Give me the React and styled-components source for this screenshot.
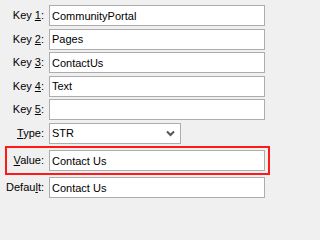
import React from 'react'
import styled, { createGlobalStyle } from 'styled-components'

const GlobalStyle = createGlobalStyle`
  html, body {
    margin: 0;
    padding: 0;
    background: #f0f0f0;
  }
  body {
    font-family: "Liberation Sans", Arial, sans-serif;
    font-size: 11px;
    color: #000;
  }
`

const Form = styled.div`
  display: flex;
  flex-direction: column;
  gap: 2.5px;
  padding: 5px 6px 0 0;
  width: 271px;
  height: 202px;
  box-sizing: border-box;
`

const Row = styled.div`
  position: relative;
  display: flex;
  align-items: center;
  gap: 5px;
  height: 21px;
  margin: ${p => (p.$highlight ? '4px 0 3.5px' : '0')};

  ${p => p.$highlight && `
    &::before {
      content: '';
      position: absolute;
      top: -4px;
      bottom: -4px;
      left: 5px;
      right: -5px;
      border: 2px solid #ff1a1a;
      pointer-events: none;
    }
  `}
`

const Label = styled.label`
  width: 44px;
  flex: none;
  text-align: right;
  white-space: nowrap;
  line-height: 21px;

  u {
    text-decoration: underline;
    text-underline-offset: 1px;
  }
`

const Field = styled.div`
  display: flex;
  align-items: center;
  box-sizing: border-box;
  height: 21px;
  width: ${p => p.$width || '216px'};
  padding: 0 2px;
  background: #fff;
  border: 1px solid #adadad;
  white-space: nowrap;
  overflow: hidden;
`

const Select = styled(Field)`
  justify-content: space-between;
  padding-right: 5px;
`

const Chevron = () => (
  <svg width="9" height="7" viewBox="0 0 9 7">
    <path d="M1 1.5 L4.5 5 L8 1.5" fill="none" stroke="#555" strokeWidth="2" />
  </svg>
)

const fields = [
  { pre: 'Key ', key: '1', post: ':', value: 'CommunityPortal' },
  { pre: 'Key ', key: '2', post: ':', value: 'Pages' },
  { pre: 'Key ', key: '3', post: ':', value: 'ContactUs' },
  { pre: 'Key ', key: '4', post: ':', value: 'Text' },
  { pre: 'Key ', key: '5', post: ':', value: '' },
]

export default function App() {
  return (
    <>
      <GlobalStyle />
      <Form>
        {fields.map(f => (
          <Row key={f.key}>
            <Label>
              {f.pre}
              <u>{f.key}</u>
              {f.post}
            </Label>
            <Field>{f.value}</Field>
          </Row>
        ))}
        <Row>
          <Label>
            <u>T</u>ype:
          </Label>
          <Select $width="132px">
            <span>STR</span>
            <Chevron />
          </Select>
        </Row>
        <Row $highlight>
          <Label>
            <u>V</u>alue:
          </Label>
          <Field>Contact Us</Field>
        </Row>
        <Row>
          <Label>
            Defau<u>l</u>t:
          </Label>
          <Field>Contact Us</Field>
        </Row>
      </Form>
    </>
  )
}
